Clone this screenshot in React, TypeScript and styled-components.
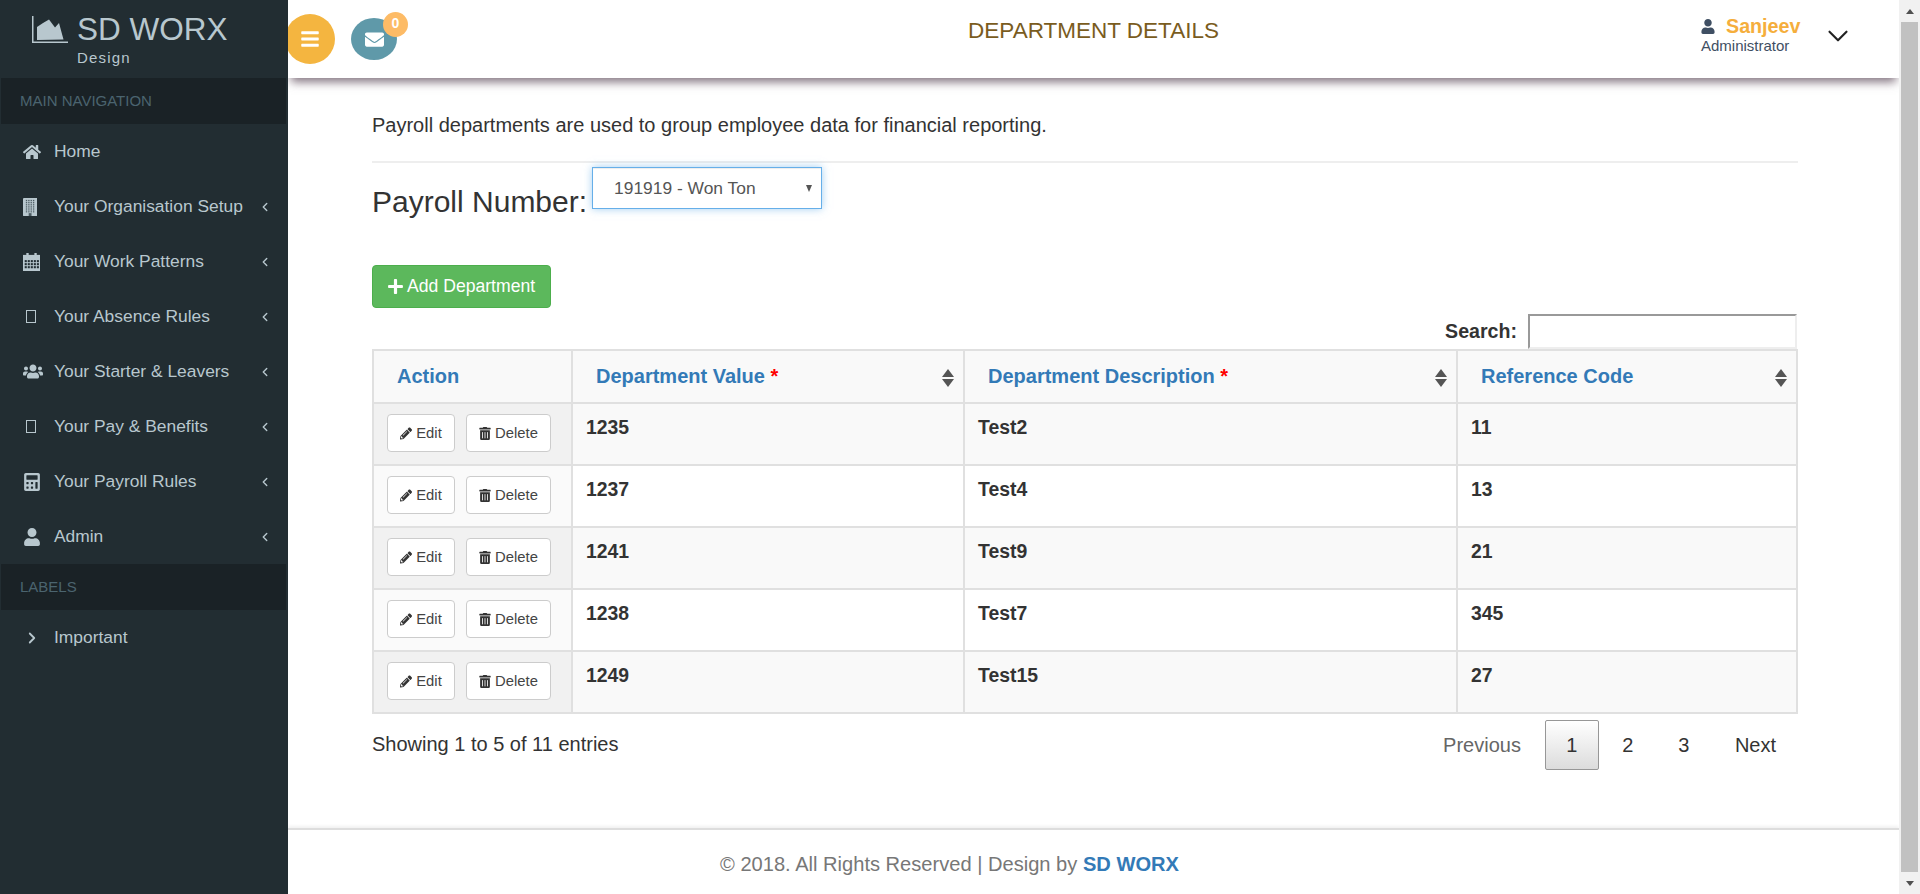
import React from 'react';
import styled, { createGlobalStyle } from 'styled-components';
import { ChevronDown, ChevronLeft, ChevronRight } from 'lucide-react';
import {
  FaBars,
  FaCalculator,
  FaEnvelope,
  FaHome,
  FaPencilAlt,
  FaPlus,
  FaTrashAlt,
  FaUser,
  FaUsers,
} from 'react-icons/fa';

const GlobalStyle = createGlobalStyle`
  html, body {
    margin: 0;
    height: 100%;
    overflow: hidden;
    background: #fff;
  }
  body {
    font-family: "Liberation Sans", Arial, sans-serif;
    color: #333;
  }
  * {
    box-sizing: border-box;
  }
`;

const Page = styled.div`
  display: flex;
  width: 1920px;
  height: 894px;
`;

const Sidebar = styled.aside`
  position: relative;
  z-index: 2;
  flex: 0 0 288px;
  background: #222d32;
  color: #b8c7ce;
`;

const Brand = styled.div`
  height: 78px;
  padding: 16px 0 0 32px;
`;

const BrandRow = styled.div`
  display: flex;
  align-items: center;
  gap: 9px;
  height: 27px;
  font-size: 31.5px;
  line-height: 27px;
`;

const BrandSub = styled.div`
  margin: 7px 0 0 45px;
  font-size: 15px;
  line-height: 16px;
  letter-spacing: 1.2px;
`;

const NavHeading = styled.div`
  height: 46px;
  margin: 0 2px 0 1px;
  padding-left: 19px;
  background: #1a2226;
  color: #4b646f;
  font-size: 15px;
  line-height: 46px;
`;

const NavList = styled.ul`
  list-style: none;
  margin: 0;
  padding: 0;
`;

const NavItem = styled.li`
  position: relative;
  display: flex;
  align-items: center;
  height: 55px;
  padding-left: 23px;
  font-size: 17.4px;
`;

const NavIcon = styled.span`
  display: flex;
  flex: 0 0 31px;
  align-items: center;

  svg {
    display: block;
    width: auto;
    height: 18px;
  }
`;

const WideIcon = styled(FaUsers)`
  && {
    width: 20px;
    height: 19px;
  }
`;

const MissingGlyph = styled.span`
  display: block;
  width: 10px;
  height: 13px;
  margin-left: 3px;
  border: 1px solid #b8c7ce;
`;

const NavArrow = styled.span`
  position: absolute;
  right: 16px;
  display: flex;
`;

const Main = styled.div`
  display: flex;
  flex: 1;
  flex-direction: column;
  min-width: 0;
`;

const Header = styled.header`
  position: relative;
  display: flex;
  flex: 0 0 78px;
  align-items: center;
  justify-content: center;
  background: #fff;
  box-shadow: 0 7px 9px -3px rgba(90, 70, 85, 0.75);
`;

const MenuButton = styled.span`
  position: absolute;
  top: 14px;
  left: -3px;
  display: flex;
  align-items: center;
  justify-content: center;
  width: 50px;
  height: 50px;
  border-radius: 50%;
  background: #f4b540;
  color: #fff;

  svg {
    width: 20px;
    height: 20px;
  }
`;

const MailButton = styled.span`
  position: absolute;
  top: 18px;
  left: 63px;
  display: flex;
  align-items: center;
  justify-content: center;
  width: 46px;
  height: 42px;
  border-radius: 50%;
  background: #5f99a9;
  color: #fff;

  svg {
    width: 19px;
    height: 19px;
  }
`;

const Badge = styled.span`
  position: absolute;
  top: -6px;
  right: -11px;
  width: 25px;
  height: 25px;
  border-radius: 50%;
  background: #fdbb66;
  color: #fff;
  font-size: 14px;
  font-weight: 700;
  line-height: 23px;
  text-align: center;
`;

const Title = styled.h1`
  margin: 0 0 17px;
  color: #7a5c1e;
  font-size: 22.5px;
  font-weight: 400;
`;

const UserBox = styled.div`
  position: absolute;
  top: 16px;
  left: 1413px;
  color: #3f4f63;
`;

const UserName = styled.div`
  display: flex;
  align-items: center;
  gap: 11px;
  color: #f5ae3c;
  font-size: 19.7px;
  font-weight: 700;
  line-height: 21px;

  svg {
    width: 14px;
    height: 15px;
    color: #3f4f63;
  }
`;

const UserRole = styled.div`
  margin-top: 1px;
  font-size: 15px;
  line-height: 16px;
`;

const UserMenu = styled.span`
  position: absolute;
  top: 19px;
  left: 1533px;
  display: flex;
  color: #222;
`;

const Content = styled.main`
  flex: 1;
  padding: 36px 101px 0 84px;
`;

const Intro = styled.p`
  margin: 0;
  padding-bottom: 25px;
  border-bottom: 2px solid #eee;
  font-size: 20px;
  line-height: 22px;
`;

const PayrollRow = styled.div`
  display: flex;
  align-items: flex-start;
  gap: 5px;
  margin-top: 4px;
`;

const PayrollLabel = styled.label`
  margin-top: 18px;
  font-size: 30px;
  line-height: 33px;
`;

const SelectWrap = styled.div`
  position: relative;

  &::after {
    content: '';
    position: absolute;
    top: 18px;
    right: 10px;
    border-top: 7px solid #555;
    border-right: 3.5px solid transparent;
    border-left: 3.5px solid transparent;
  }
`;

const PayrollSelect = styled.select`
  display: block;
  width: 230px;
  height: 42px;
  padding: 0 21px;
  appearance: none;
  border: 1px solid #66afe9;
  border-radius: 0;
  outline: none;
  background: #fff;
  box-shadow: inset 0 1px 1px rgba(0, 0, 0, 0.075), 0 0 8px rgba(102, 175, 233, 0.6);
  color: #555;
  font-family: inherit;
  font-size: 17.4px;
`;

const AddButton = styled.button`
  display: flex;
  align-items: center;
  gap: 3px;
  height: 43px;
  margin-top: 47px;
  padding: 0 15px 0 14px;
  border: 1px solid #4cae4c;
  border-radius: 4px;
  background: #5cb85c;
  color: #fff;
  font-family: inherit;
  font-size: 17.6px;

  svg {
    width: 17px;
    height: 17px;
  }
`;

const SearchRow = styled.div`
  display: flex;
  align-items: center;
  justify-content: flex-end;
  gap: 11px;
  width: 1425px;
  margin-top: 6px;
  font-size: 19.6px;
  font-weight: 700;
`;

const SearchInput = styled.input`
  width: 269px;
  height: 35px;
  border: 2px solid;
  border-color: #999 #eee #eee #999;
  background: #fff;
`;

const Table = styled.table`
  width: 1424px;
  border-collapse: collapse;
  table-layout: fixed;
`;

const HeadCell = styled.th<{ $width: number }>`
  position: relative;
  width: ${(p) => p.$width}px;
  height: 53px;
  padding: 0 0 0 23px;
  border: 2px solid #e0e0e0;
  border-bottom-width: 1px;
  background: #f9f9f9;
  color: #337ab7;
  font-size: 20px;
  font-weight: 700;
  text-align: left;
`;

const Required = styled.span`
  color: #f00;
`;

const SortIcon = styled.span`
  position: absolute;
  top: 18px;
  right: 9px;
  display: flex;
  flex-direction: column;
  gap: 2px;

  &::before,
  &::after {
    content: '';
    border-right: 6px solid transparent;
    border-left: 6px solid transparent;
  }

  &::before {
    border-bottom: 8px solid #555;
  }

  &::after {
    border-top: 8px solid #555;
  }
`;

const Row = styled.tr`
  &:nth-child(odd) td {
    background: #f9f9f9;
  }
  &:nth-child(odd) td:first-child {
    background: #f1f1f1;
  }
  &:nth-child(even) td:first-child {
    background: #fafafa;
  }
`;

const Cell = styled.td`
  height: 62px;
  padding: 10px 13px 0;
  border: 2px solid #e0e0e0;
  background: #fff;
  color: #333;
  font-size: 19.4px;
  font-weight: 700;
  line-height: 26px;
  vertical-align: top;
`;

const ActionCell = styled(Cell)`
  padding: 10px 0 0 13px;
`;

const ActionGroup = styled.div`
  display: flex;
  gap: 11px;
`;

const ActionButton = styled.button<{ $width: number }>`
  display: flex;
  align-items: center;
  justify-content: center;
  gap: 4px;
  width: ${(p) => p.$width}px;
  height: 38px;
  padding: 0;
  border: 1px solid #ccc;
  border-radius: 4px;
  background: #fff;
  color: #444;
  font-family: inherit;
  font-size: 14.8px;

  svg {
    width: 12px;
    height: 13px;
    color: #333;
  }
`;

const TableFoot = styled.div`
  display: flex;
  justify-content: space-between;
  width: 1426px;
  margin-top: 6px;
`;

const Info = styled.div`
  padding-top: 13px;
  font-size: 20px;
  line-height: 22px;
`;

const Pager = styled.div`
  display: flex;
  gap: 2px;
  font-size: 20px;
`;

const PageLink = styled.span<{ $active?: boolean; $muted?: boolean; $pad?: number }>`
  display: flex;
  align-items: center;
  justify-content: center;
  min-width: 54px;
  height: 50px;
  padding: 0 ${(p) => p.$pad ?? 0}px;
  border: 1px solid ${(p) => (p.$active ? '#979797' : 'transparent')};
  border-radius: 2px;
  background: ${(p) => (p.$active ? 'linear-gradient(to bottom, #fff 0%, #dcdcdc 100%)' : 'none')};
  color: ${(p) => (p.$muted ? '#666' : '#333')};
`;

const Footer = styled.footer`
  flex: 0 0 66px;
  padding: 23px 0 0 432px;
  border-top: 2px solid #ddd;
  box-shadow: 0 -2px 3px rgba(0, 0, 0, 0.06);
  color: #777;
  font-size: 20.1px;
  line-height: 22px;
`;

const FooterBrand = styled.b`
  color: #337ab7;
`;

const Scrollbar = styled.div`
  position: relative;
  z-index: 3;
  display: flex;
  flex: 0 0 21px;
  flex-direction: column;
  align-items: center;
  background: #f1f1f1;
`;

const ScrollButton = styled.span<{ $down?: boolean }>`
  display: flex;
  flex: 0 0 22px;
  align-items: center;
  justify-content: center;

  &::before {
    content: '';
    border-right: 4.5px solid transparent;
    border-left: 4.5px solid transparent;
    ${(p) => (p.$down ? 'border-top: 5px solid #505050;' : 'border-bottom: 5px solid #505050;')}
  }
`;

const ScrollThumb = styled.span`
  flex: 1;
  width: 17px;
  background: #c1c1c1;
`;

function LogoIcon() {
  return (
    <svg width="36" height="28" viewBox="0 0 36 28" fill="#b8c7ce">
      <path d="M0 0h1.5v25.5H36V27H0z" />
      <path d="M5 24V11l6-4 6-3.5 6 8 4-4.5 4.500 16.500z" />
    </svg>
  );
}

function BuildingIcon() {
  const windows: React.ReactNode[] = [];
  for (let y = 2; y < 15; y += 2) {
    for (let x = 3; x < 13; x += 2.5) {
      windows.push(<rect key={`${x}-${y}`} x={x} y={y} width="1.4" height="1.2" />);
    }
  }
  return (
    <svg width="15" height="19" viewBox="0 0 15 19">
      <rect width="15" height="19" rx="0.5" fill="#b8c7ce" />
      <g fill="#4b5a61">{windows}</g>
      <rect x="6" y="16" width="3" height="3" fill="#4b5a61" />
    </svg>
  );
}

function CalendarIcon() {
  const cells: React.ReactNode[] = [];
  for (let y = 7.5; y < 17; y += 3.2) {
    for (let x = 1.8; x < 15; x += 3.2) {
      cells.push(<rect key={`${x}-${y}`} x={x} y={y} width="2.2" height="2.200" fill="#222d32" />);
    }
  }
  return (
    <svg width="18" height="19" viewBox="0 0 18 19">
      <rect y="2" width="18" height="17" fill="#b8c7ce" />
      <rect x="3.500" y="0" width="2.500" height="5" fill="#b8c7ce" />
      <rect x="12" y="0" width="2.500" height="5" fill="#b8c7ce" />
      {cells}
    </svg>
  );
}

type NavEntry = {
  label: string;
  icon: React.ReactNode;
  arrow?: boolean;
};

const navItems: NavEntry[] = [
  { label: 'Home', icon: <FaHome /> },
  { label: 'Your Organisation Setup', icon: <BuildingIcon />, arrow: true },
  { label: 'Your Work Patterns', icon: <CalendarIcon />, arrow: true },
  { label: 'Your Absence Rules', icon: <MissingGlyph />, arrow: true },
  { label: 'Your Starter & Leavers', icon: <WideIcon />, arrow: true },
  { label: 'Your Pay & Benefits', icon: <MissingGlyph />, arrow: true },
  { label: 'Your Payroll Rules', icon: <FaCalculator />, arrow: true },
  { label: 'Admin', icon: <FaUser />, arrow: true },
];

const rows = [
  ['1235', 'Test2', '11'],
  ['1237', 'Test4', '13'],
  ['1241', 'Test9', '21'],
  ['1238', 'Test7', '345'],
  ['1249', 'Test15', '27'],
];

function NavLink({ label, icon, arrow }: NavEntry) {
  return (
    <NavItem>
      <NavIcon>{icon}</NavIcon>
      {label}
      {arrow && (
        <NavArrow>
          <ChevronLeft size={14} strokeWidth={2.4} />
        </NavArrow>
      )}
    </NavItem>
  );
}

export default function App() {
  return (
    <Page>
      <GlobalStyle />
      <Sidebar>
        <Brand>
          <BrandRow>
            <LogoIcon />
            SD WORX
          </BrandRow>
          <BrandSub>Design</BrandSub>
        </Brand>
        <NavHeading>MAIN NAVIGATION</NavHeading>
        <NavList>
          {navItems.map((item) => (
            <NavLink key={item.label} {...item} />
          ))}
        </NavList>
        <NavHeading>LABELS</NavHeading>
        <NavList>
          <NavLink label="Important" icon={<ChevronRight size={14} strokeWidth={2.4} />} />
        </NavList>
      </Sidebar>
      <Main>
        <Header>
          <MenuButton>
            <FaBars />
          </MenuButton>
          <MailButton>
            <FaEnvelope />
            <Badge>0</Badge>
          </MailButton>
          <Title>DEPARTMENT DETAILS</Title>
          <UserBox>
            <UserName>
              <FaUser />
              Sanjeev
            </UserName>
            <UserRole>Administrator</UserRole>
          </UserBox>
          <UserMenu>
            <ChevronDown size={34} strokeWidth={1.5} />
          </UserMenu>
        </Header>
        <Content>
          <Intro>Payroll departments are used to group employee data for financial reporting.</Intro>
          <PayrollRow>
            <PayrollLabel>Payroll Number:</PayrollLabel>
            <SelectWrap>
              <PayrollSelect defaultValue="191919">
                <option value="191919">191919 - Won Ton</option>
              </PayrollSelect>
            </SelectWrap>
          </PayrollRow>
          <AddButton>
            <FaPlus />
            Add Department
          </AddButton>
          <SearchRow>
            Search:
            <SearchInput />
          </SearchRow>
          <Table>
            <thead>
              <tr>
                <HeadCell $width={199}>Action</HeadCell>
                <HeadCell $width={392}>
                  Department Value <Required>*</Required>
                  <SortIcon />
                </HeadCell>
                <HeadCell $width={493}>
                  Department Description <Required>*</Required>
                  <SortIcon />
                </HeadCell>
                <HeadCell $width={340}>
                  Reference Code
                  <SortIcon />
                </HeadCell>
              </tr>
            </thead>
            <tbody>
              {rows.map((row) => (
                <Row key={row[0]}>
                  <ActionCell>
                    <ActionGroup>
                      <ActionButton $width={68}>
                        <FaPencilAlt />
                        Edit
                      </ActionButton>
                      <ActionButton $width={85}>
                        <FaTrashAlt />
                        Delete
                      </ActionButton>
                    </ActionGroup>
                  </ActionCell>
                  {row.map((value) => (
                    <Cell key={value}>{value}</Cell>
                  ))}
                </Row>
              ))}
            </tbody>
          </Table>
          <TableFoot>
            <Info>Showing 1 to 5 of 11 entries</Info>
            <Pager>
              <PageLink $muted $pad={21}>Previous</PageLink>
              <PageLink $active>1</PageLink>
              <PageLink>2</PageLink>
              <PageLink>3</PageLink>
              <PageLink $pad={21}>Next</PageLink>
            </Pager>
          </TableFoot>
        </Content>
        <Footer>
          © 2018. All Rights Reserved | Design by <FooterBrand>SD WORX</FooterBrand>
        </Footer>
      </Main>
      <Scrollbar>
        <ScrollButton />
        <ScrollThumb />
        <ScrollButton $down />
      </Scrollbar>
    </Page>
  );
}
